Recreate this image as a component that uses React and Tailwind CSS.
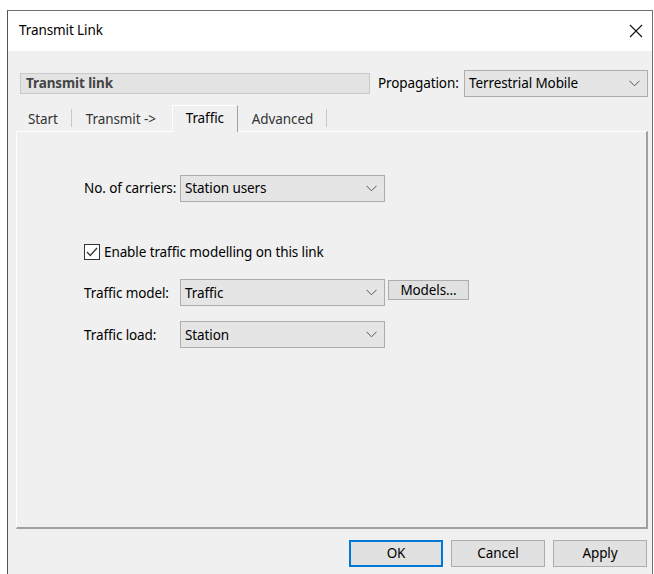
import React from "react";

const font = {
  fontFamily: '"Segoe UI", "Noto Sans", "Open Sans", sans-serif',
  letterSpacing: "-0.1px",
};

function Chevron() {
  return (
    <svg width="11" height="7" viewBox="0 0 11 7" className="shrink-0">
      <path d="M0.5 0.8 L5.5 5.8 L10.5 0.8" fill="none" stroke="#555" strokeWidth="1" />
    </svg>
  );
}

function Select({ value, className }) {
  return (
    <div
      className={
        "flex items-center justify-between border border-[#adadad] bg-[#e5e5e5] pl-[4px] pr-[7px] text-[13.5px] text-black " +
        className
      }
    >
      <span>{value}</span>
      <Chevron />
    </div>
  );
}

function Button({ children, primary }) {
  return (
    <div
      className={
        "flex h-[27px] w-[94px] items-center justify-center bg-[#e1e1e1] text-[13.5px] text-black " +
        (primary ? "border-2 border-[#0078d7]" : "border border-[#adadad]")
      }
    >
      {children}
    </div>
  );
}

export default function App() {
  return (
    <div className="h-[574px] w-[654px] overflow-hidden bg-white pl-[7px] pt-[10px]" style={font}>
      <div className="flex h-[600px] w-[646px] flex-col border-l border-t border-r border-l-[#555] border-t-[#6f6f6f] border-r-[#6f6f6f] bg-[#f0f0f0]">
        {/* title bar */}
        <div className="flex h-[40px] items-center justify-between bg-white pb-[2px] pl-[11px] pr-[8px]">
          <span className="text-[13.5px] text-black">Transmit Link</span>
          <svg width="14" height="14" viewBox="0 0 14 14" className="mr-[1px] mt-[1px]">
            <path d="M1 1 L13 13 M13 1 L1 13" stroke="#111" strokeWidth="1.1" />
          </svg>
        </div>

        {/* header row */}
        <div className="flex items-center pl-[12px] pr-[4px] pt-[19px]">
          <div className="flex h-[21px] w-[350px] items-center border border-[#c9c9c9] bg-[#e3e3e3] pl-[5px] text-[13.5px] font-bold text-[#444]">
            Transmit link
          </div>
          <span className="ml-[8px] text-[13.5px] text-black">Propagation:</span>
          <Select value="Terrestrial Mobile" className="ml-auto h-[27px] w-[184px]" />
        </div>

        {/* tabs */}
        <div className="ml-[8px] mt-[7px] flex h-[27px] items-end text-[13.5px] text-[#333]">
          <div className="flex h-[24px] items-center pl-[12px] pr-[13px]">Start</div>
          <div className="h-[18px] self-center border-l border-[#c8c8c8]" />
          <div className="flex h-[24px] w-[100px] items-center pl-[14px]">Transmit -&gt;</div>
          <div className="relative z-10 -mb-[1px] flex h-[27px] w-[66px] items-center justify-center border-l border-t border-r border-l-white border-t-white border-r-[#a0a0a0] bg-[#f0f0f0] pb-[1px] text-black">
            Traffic
          </div>
          <div className="flex h-[24px] w-[88px] items-center pl-[14px]">Advanced</div>
          <div className="h-[18px] self-center border-l border-[#c8c8c8]" />
        </div>

        {/* tab page */}
        <div className="ml-[8px] flex h-[398px] w-[632px] flex-col border-l border-t border-r-2 border-b-2 border-l-white border-t-white border-r-[#a0a0a0] border-b-[#a0a0a0] pl-[67px] text-[13.5px] text-black">
          <div className="mt-[43px] flex items-center">
            <span className="w-[96px]">No. of carriers:</span>
            <Select value="Station users" className="h-[27px] w-[205px]" />
          </div>

          <div className="mt-[40px] flex items-center">
            <div className="flex h-[16px] w-[16px] items-center justify-center border border-[#333] bg-white">
              <svg width="12" height="10" viewBox="0 0 12 10">
                <path d="M1 5 L4.3 8.5 L11 1" fill="none" stroke="#333" strokeWidth="1.3" />
              </svg>
            </div>
            <span className="ml-[4px]">Enable traffic modelling on this link</span>
          </div>

          <div className="mt-[17px] flex items-center">
            <span className="w-[96px]">Traffic model:</span>
            <Select value="Traffic" className="h-[27px] w-[205px]" />
            <div className="mb-[5px] ml-[3px] flex h-[20px] w-[81px] items-center justify-center border border-[#adadad] bg-[#e1e1e1]">
              Models...
            </div>
          </div>

          <div className="mt-[15px] flex items-center">
            <span className="w-[96px]">Traffic load:</span>
            <Select value="Station" className="h-[27px] w-[205px]" />
          </div>
        </div>

        {/* buttons */}
        <div className="mt-[11px] flex gap-[8px] pl-[341px]">
          <Button primary>OK</Button>
          <Button>Cancel</Button>
          <Button>Apply</Button>
        </div>
      </div>
    </div>
  );
}
